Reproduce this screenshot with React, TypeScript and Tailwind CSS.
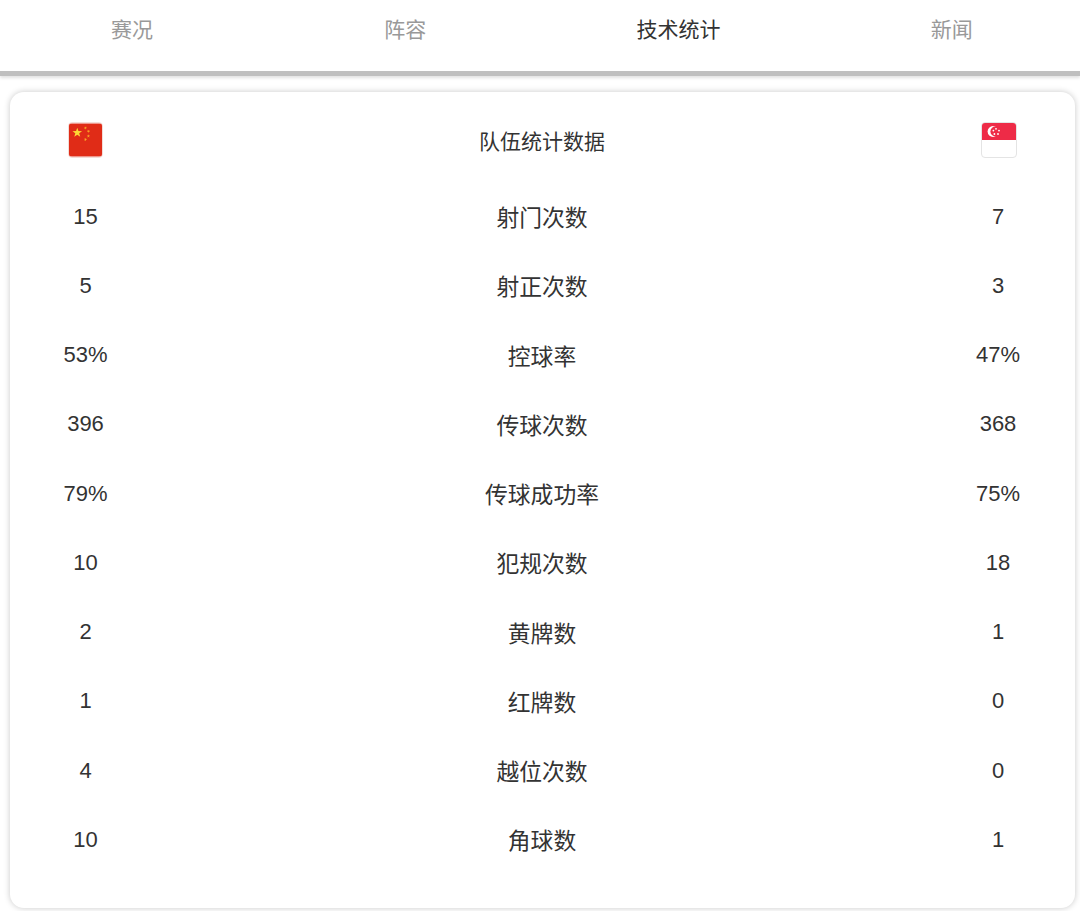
const tabs = ["赛况", "阵容", "技术统计", "新闻"];

const stats = [
  { left: "15", name: "射门次数", right: "7" },
  { left: "5", name: "射正次数", right: "3" },
  { left: "53%", name: "控球率", right: "47%" },
  { left: "396", name: "传球次数", right: "368" },
  { left: "79%", name: "传球成功率", right: "75%" },
  { left: "10", name: "犯规次数", right: "18" },
  { left: "2", name: "黄牌数", right: "1" },
  { left: "1", name: "红牌数", right: "0" },
  { left: "4", name: "越位次数", right: "0" },
  { left: "10", name: "角球数", right: "1" },
];

const cjk = "font-['Liberation_Sans','Noto_Sans_CJK_SC',sans-serif]";

function star(cx: number, cy: number, r: number, rot = 0) {
  const pts: string[] = [];
  for (let i = 0; i < 10; i++) {
    const rad = i % 2 === 0 ? r : r * 0.4;
    const a = ((-90 + rot + i * 36) * Math.PI) / 180;
    pts.push(`${(cx + rad * Math.cos(a)).toFixed(2)},${(cy + rad * Math.sin(a)).toFixed(2)}`);
  }
  return pts.join(" ");
}

function ChinaFlag() {
  return (
    <div className="w-[35px] h-[36px] rounded-[4px] border border-[#f3dcd8] overflow-hidden">
      <svg viewBox="0 0 34 34" className="w-full h-full block">
        <rect width="34" height="34" fill="#e02c17" />
        <polygon points={star(8.5, 9.5, 5.2)} fill="#fdd835" />
        <polygon points={star(17, 4.5, 1.8, 20)} fill="#f9a825" />
        <polygon points={star(20, 8, 1.8, 40)} fill="#f9a825" />
        <polygon points={star(20, 13, 1.8, 0)} fill="#f9a825" />
        <polygon points={star(17, 16.5, 1.8, 20)} fill="#f9a825" />
      </svg>
    </div>
  );
}

function SingaporeFlag() {
  return (
    <div className="w-[36px] h-[36px] rounded-[4px] border border-[#e4e4e4] overflow-hidden bg-white">
      <svg viewBox="0 0 34 34" className="w-full h-full block">
        <rect width="34" height="17" fill="#ee2b47" />
        <circle cx="11" cy="8.5" r="5.4" fill="#fff" />
        <circle cx="13.4" cy="8.5" r="5" fill="#ee2b47" />
        <circle cx="14" cy="5.8" r="0.9" fill="#fff" />
        <circle cx="17" cy="7.6" r="0.9" fill="#fff" />
        <circle cx="16" cy="11" r="0.9" fill="#fff" />
        <circle cx="12.4" cy="11" r="0.9" fill="#fff" />
        <circle cx="11.4" cy="7.6" r="0.9" fill="#fff" />
      </svg>
    </div>
  );
}

export default function App() {
  return (
    <div className={`w-[1080px] h-[911px] overflow-hidden bg-white text-[#333] ${cjk}`}>
      <div className="h-[71px] bg-white border-b-[5px] border-[#bfbfbf] box-content shadow-[0_2px_3px_rgba(0,0,0,0.12)]">
        <div className="grid grid-cols-[repeat(4,273.2px)] ml-[-4.5px] pt-[17px]">
          {tabs.map((t, i) => (
            <div key={t} className={`text-center text-[21px] leading-[26px] ${i === 2 ? "text-[#333]" : "text-[#999]"}`}>
              {t}
            </div>
          ))}
        </div>
      </div>

      <div className="ml-[10px] mt-[16px] w-[1065px] h-[816px] bg-white rounded-[14px] shadow-[0_0_6px_rgba(0,0,0,0.22)]">
        <div className="grid grid-cols-[151px_1fr_150px] pr-[2px] items-start pt-[30px] h-[68px]">
          <div className="flex justify-center"><ChinaFlag /></div>
          <div className="text-center text-[21px] leading-[36px] pt-[2px]">队伍统计数据</div>
          <div className="flex justify-center pl-[1px]"><SingaporeFlag /></div>
        </div>
        <div className="pt-[22px]">
          {stats.map((s) => (
            <div key={s.name} className="grid grid-cols-[151px_1fr_150px] pr-[2px] items-center h-[69.25px]">
              <div className="text-center text-[22px] leading-[30px]">{s.left}</div>
              <div className="text-center text-[22.8px] leading-[30px] pt-[3px]">{s.name}</div>
              <div className="text-center text-[22px] leading-[30px]">{s.right}</div>
            </div>
          ))}
        </div>
      </div>
    </div>
  );
}
